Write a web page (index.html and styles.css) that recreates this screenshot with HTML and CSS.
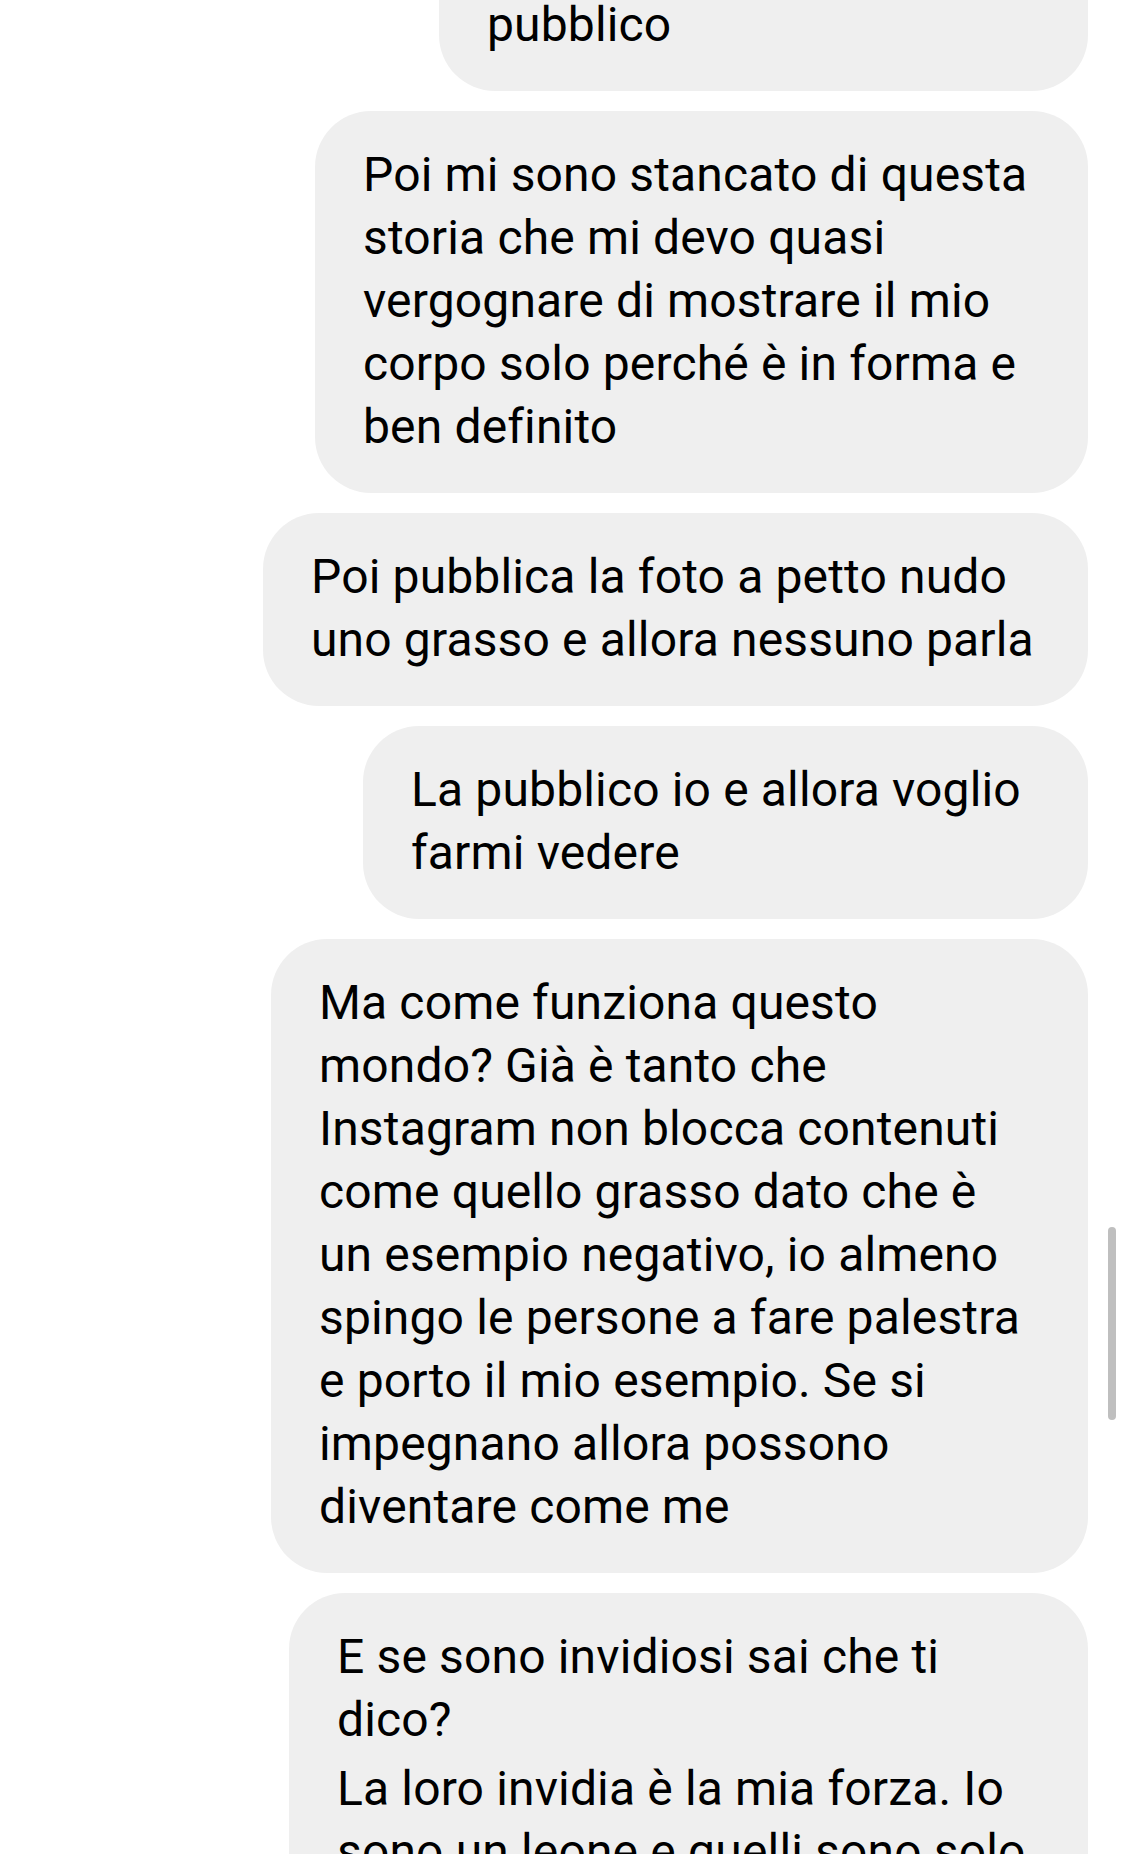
FILE: index.html
```html
<!DOCTYPE html>
<html lang="it">
<head>
<meta charset="utf-8">
<title>Chat</title>
<link rel="stylesheet" href="styles.css">
</head>
<body>
<div class="chat">
  <div class="bubble b1"><p><span class="offscreen-line">&nbsp;</span><br>pubblico</p></div>
  <div class="bubble b2"><p>Poi mi sono stancato di questa<br>storia che mi devo quasi<br>vergognare di mostrare il mio<br>corpo solo perché è in forma e<br>ben definito</p></div>
  <div class="bubble b3"><p>Poi pubblica la foto a petto nudo<br>uno grasso e allora nessuno parla</p></div>
  <div class="bubble b4"><p>La pubblico io e allora voglio<br>farmi vedere</p></div>
  <div class="bubble b5"><p>Ma come funziona questo<br>mondo? Già è tanto che<br>Instagram non blocca contenuti<br>come quello grasso dato che è<br>un esempio negativo, io almeno<br>spingo le persone a fare palestra<br>e porto il mio esempio. Se si<br>impegnano allora possono<br>diventare come me</p></div>
  <div class="bubble b6"><p>E se sono invidiosi sai che ti<br>dico?</p><p>La loro invidia è la mia forza. Io<br>sono un leone e quelli sono solo</p></div>
</div>
<div class="scroll-indicator"></div>
</body>
</html>
```

FILE: styles.css
```css
html, body {
  margin: 0;
  padding: 0;
  height: 1854px;
  overflow: hidden;
  background: #ffffff;
}

body {
  display: flow-root;
  font-family: Roboto, "Noto Sans", "Liberation Sans", sans-serif;
  font-size: 48px;
  line-height: 63px;
  letter-spacing: 0.15px;
  color: #000000;
}

.chat {
  display: flex;
  flex-direction: column;
  align-items: flex-end;
  gap: 20px;
  padding-right: 37px;
  margin-top: -102px;
}

.bubble {
  box-sizing: border-box;
  background: #efefef;
  border-radius: 56px;
  padding: 32px 0 35px 48px;
  white-space: nowrap;
}

.bubble p {
  margin: 0;
}

.bubble p + p {
  margin-top: 6px;
}

.b1 { width: 649px; }
.b2 { width: 773px; }
.b3 { width: 825px; }
.b4 { width: 725px; }
.b5 { width: 817px; }
.b6 { width: 799px; }

.scroll-indicator {
  position: fixed;
  left: 1108px;
  top: 1227px;
  width: 8px;
  height: 193px;
  border-radius: 4px;
  background: #bfbfbf;
}
```
